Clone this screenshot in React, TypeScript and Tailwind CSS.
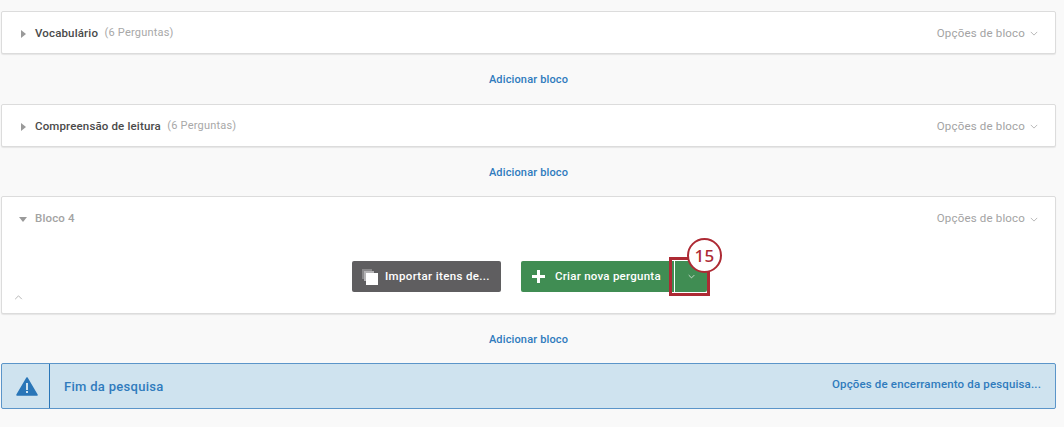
import React from "react";

const font = { fontFamily: "Roboto, 'Liberation Sans', sans-serif" };

function Chevron({ className }: { className: string }) {
  return (
    <svg viewBox="0 0 10 6" className={className} fill="none" stroke="currentColor" strokeWidth="1">
      <path d="M1 1l4 4 4-4" />
    </svg>
  );
}

function Options() {
  return (
    <div className="flex items-center gap-[5px] text-[11.5px] tracking-[0.17px] text-[#a3a3a3]">
      <span>Opções de bloco</span>
      <Chevron className="w-[8px] h-[5px] text-[#a8a8a8]" />
    </div>
  );
}

function AddBlock() {
  return (
    <div className="h-[50px] pt-[3px] flex items-center justify-center text-[11px] tracking-[0.15px] font-medium text-[#2f7bbd]">
      Adicionar bloco
    </div>
  );
}

function Block({ title, count }: { title: string; count: string }) {
  return (
    <div className="h-[43px] pt-[2px] bg-white border border-[#dcdcdc] rounded-[2px] shadow-[0_1px_1px_rgba(0,0,0,0.08)] flex items-center justify-between pl-[19px] pr-[17px]">
      <div className="flex items-center">
        <svg viewBox="0 0 5 8" className="w-[5px] h-[8px] mr-[9px]"><path d="M0 0l5 4-5 4z" fill="#9a9a9a" /></svg>
        <span className="text-[11.5px] tracking-[0.15px] font-medium text-[#4a4a4a]">{title}</span>
        <span className="ml-[6.5px] text-[11px] tracking-[0.2px] text-[#a8a8a8]">{count}</span>
      </div>
      <Options />
    </div>
  );
}

export default function App() {
  return (
    <div style={font} className="w-[1064px] h-[427px] bg-[#f9f9f9] pt-[11px] pl-[1px] pr-[8px] overflow-hidden">
      <Block title="Vocabulário" count="(6 Perguntas)" />
      <AddBlock />
      <Block title="Compreensão de leitura" count="(6 Perguntas)" />
      <AddBlock />
      <div className="h-[118px] -mt-px bg-white border border-[#dcdcdc] rounded-[2px] shadow-[0_1px_1px_rgba(0,0,0,0.08)] flex flex-col relative">
        <div className="h-[43px] pt-px shrink-0 flex items-center justify-between pl-[17px] pr-[17px]">
          <div className="flex items-center">
            <svg viewBox="0 0 8 5" className="w-[8px] h-[5px] mr-[8px]"><path d="M0 0h8L4 5z" fill="#9a9a9a" /></svg>
            <span className="text-[11.5px] tracking-[0.15px] font-medium text-[#a3a3a3]">Bloco 4</span>
          </div>
          <Options />
        </div>
        <div className="flex justify-center pt-[21px] pl-[2px]">
          <div className="h-[31px] w-[149px] bg-[#5f5e60] rounded-[2px] flex items-center pl-[10px] text-white text-[11.5px] tracking-[0.35px] font-medium">
            <svg viewBox="0 0 16 16" className="w-[16px] h-[16px] mr-[7px]">
              <rect x="0" y="0" width="10" height="10" fill="#8a898b" />
              <rect x="2" y="2" width="10" height="10" fill="#b5b4b6" />
              <rect x="4" y="4" width="12" height="12" fill="#ffffff" />
            </svg>
            Importar itens de...
          </div>
          <div className="ml-[20px] h-[31px] w-[186px] bg-[#408d53] rounded-[2px] flex items-center text-white text-[11.5px] tracking-[0.25px] font-medium relative">
            <svg viewBox="0 0 13 13" className="w-[13px] h-[13px] ml-[11px] mr-[10px]"><path d="M5 0h3v5h5v3H8v5H5V8H0V5h5z" fill="#fff" /></svg>
            Criar nova pergunta
            <div className="absolute right-0 top-0 h-full w-[33px] border-l border-white flex items-center justify-center">
              <Chevron className="w-[7px] h-[5px] text-white" />
            </div>
            <div className="absolute left-[148px] top-[-4px] w-[41px] h-[39px] border-[3px] border-[#ad2a34]" />
            <div className="absolute left-[166px] top-[-23px] w-[35px] h-[35px] rounded-full bg-white border-[2.5px] border-[#ad2a34] flex items-center justify-center text-[#ad2a34] text-[17px] font-medium" style={{ fontFamily: "'Noto Sans', sans-serif" }}>
              15
            </div>
          </div>
        </div>
        <Chevron className="absolute left-[12px] top-[98px] w-[9px] h-[5px] text-[#a8a8a8] rotate-180" />
      </div>
      <AddBlock />
      <div className="h-[46px] -mt-px bg-[#cfe3ef] border border-[#5b95c9] rounded-[2px] flex items-center justify-between pr-[14px] text-[#2f7bbd]">
        <div className="flex items-center h-full">
          <div className="w-[48px] h-full border-r border-[#2a76b8] flex items-center justify-center">
            <svg viewBox="0 0 22 19" className="w-[22px] h-[19px] ml-[2px]">
              <path d="M11 1L21 18H1z" fill="#2a76b8" stroke="#2a76b8" strokeWidth="1.5" strokeLinejoin="round" />
              <rect x="10" y="6" width="2" height="7" fill="#cfe3ef" />
              <rect x="10" y="14" width="2" height="2" fill="#cfe3ef" />
            </svg>
          </div>
          <span className="ml-[14px] pt-[2px] text-[13px] tracking-[0.3px] font-medium">Fim da pesquisa</span>
        </div>
        <span className="text-[11.5px] tracking-[0.15px] font-medium -mt-[2px]">Opções de encerramento da pesquisa...</span>
      </div>
    </div>
  );
}
